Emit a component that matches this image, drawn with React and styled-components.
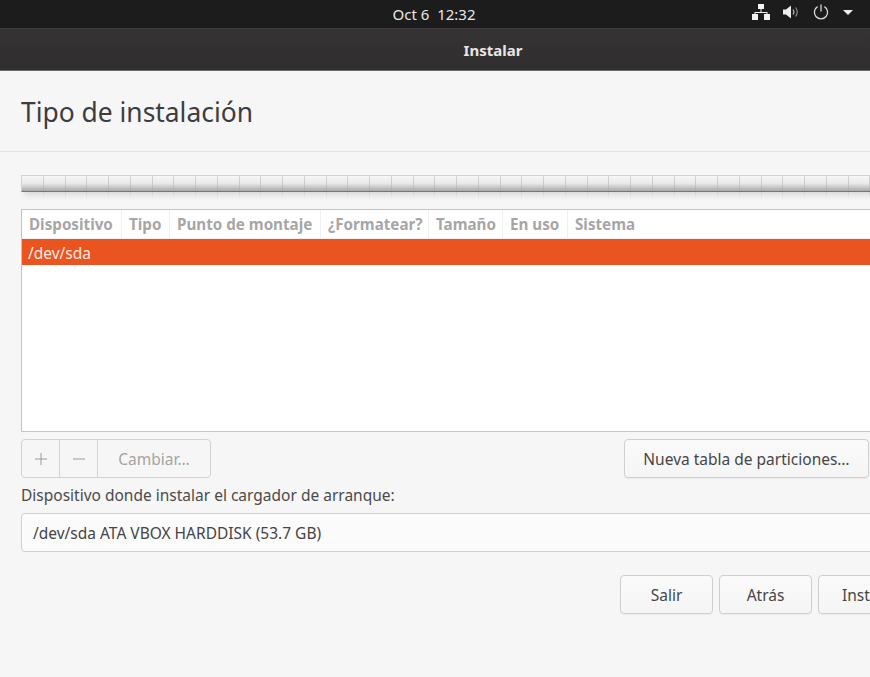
import React from 'react';
import styled, { createGlobalStyle } from 'styled-components';

const GlobalStyle = createGlobalStyle`
  html, body {
    margin: 0;
    padding: 0;
    height: 100%;
    overflow: hidden;
    background: #f6f6f6;
  }
  * { box-sizing: border-box; }
`;

const columns = [
  { label: 'Dispositivo', width: 100 },
  { label: 'Tipo', width: 48 },
  { label: 'Punto de montaje', width: 151 },
  { label: '¿Formatear?', width: 108 },
  { label: 'Tamaño', width: 74 },
  { label: 'En uso', width: 65 },
  { label: 'Sistema', width: 100 },
];

const App = () => (
  <Page>
    <GlobalStyle />
    <TopBar>
      <Clock>Oct 6&nbsp;&nbsp;12:32</Clock>
      <Tray>
        <svg width="18" height="16" viewBox="0 0 18 16" fill="#f2f2f2">
          <rect x="6" y="0" width="6" height="5" />
          <rect x="0" y="10" width="6" height="6" />
          <rect x="12" y="10" width="6" height="6" />
          <path d="M8.5 5h1v3h6v2h-1V9h-11v1h-1V8h6z" />
        </svg>
        <svg width="17" height="16" viewBox="0 0 17 16" fill="none">
          <path d="M0 5.5h3L8 1.5v13l-5-4H0z" fill="#eeeeee" />
          <path d="M10 5.5c1 1.4 1 3.6 0 5" stroke="#bbbbbb" strokeWidth="1.2" />
          <path d="M12.5 3.5c2 2.6 2 6.4 0 9" stroke="#8a8a8a" strokeWidth="1.2" />
        </svg>
        <svg width="16" height="16" viewBox="0 0 16 16" fill="none" stroke="#d8d8d8" strokeWidth="1.3">
          <path d="M4.6 2.6a6.6 6.6 0 1 0 6.8 0" />
          <path d="M8 0.5v7" />
        </svg>
        <Caret />
      </Tray>
    </TopBar>
    <TitleBar>Instalar</TitleBar>
    <Header>
      <Heading>Tipo de instalación</Heading>
    </Header>
    <Content>
      <PartitionBar>
        {Array.from({ length: 40 }).map((_, i) => (
          <Tick key={i} />
        ))}
      </PartitionBar>
      <Table>
        <HeaderRow>
          {columns.map((c) => (
            <HeaderCell key={c.label} $width={c.width}>
              {c.label}
            </HeaderCell>
          ))}
        </HeaderRow>
        <SelectedRow>/dev/sda</SelectedRow>
      </Table>
      <Toolbar>
        <ButtonGroup>
          <GroupButton $width={38}>
            <svg width="14" height="14" viewBox="0 0 14 14" stroke="#9a9a9a" strokeWidth="1">
              <path d="M7 1v12M1 7h12" />
            </svg>
          </GroupButton>
          <GroupButton $width={38}>
            <svg width="14" height="14" viewBox="0 0 14 14" stroke="#9a9a9a" strokeWidth="1">
              <path d="M1 7h12" />
            </svg>
          </GroupButton>
          <GroupButton $width={112}>Cambiar…</GroupButton>
        </ButtonGroup>
        <Button $width={245}>Nueva tabla de particiones…</Button>
      </Toolbar>
      <BootLabel>Dispositivo donde instalar el cargador de arranque:</BootLabel>
      <BootSelect>/dev/sda ATA VBOX HARDDISK (53.7 GB)</BootSelect>
      <Actions>
        <Button $width={93}>Salir</Button>
        <Button $width={93}>Atrás</Button>
        <Button $width={150}>Instalar ahora</Button>
      </Actions>
    </Content>
  </Page>
);

const Page = styled.div`
  width: 870px;
  height: 677px;
  overflow: hidden;
  background: #f6f6f6;
  font-family: 'Noto Sans', 'Open Sans', sans-serif;
  color: #3d3d3d;
`;

const TopBar = styled.div`
  height: 28px;
  display: flex;
  align-items: center;
  justify-content: center;
  position: relative;
  padding-right: 2px;
  background: #1c1c1c;
`;

const Clock = styled.div`
  font-size: 15px;
  color: #e8e8e8;
`;

const Tray = styled.div`
  position: absolute;
  top: 4px;
  right: 17px;
  display: flex;
  align-items: center;
  gap: 13px;
`;

const Caret = styled.div`
  width: 0;
  height: 0;
  margin-left: 1px;
  border-left: 5.5px solid transparent;
  border-right: 5.5px solid transparent;
  border-top: 5px solid #eeeeee;
`;

const TitleBar = styled.div`
  height: 43px;
  padding-left: 116px;
  display: flex;
  align-items: center;
  justify-content: center;
  background: linear-gradient(#353333, #2f2d2d);
  border-top: 1px solid #3d3b3b;
  border-bottom: 1px solid #6a6a6a;
  color: #e6e6e6;
  font-size: 15px;
  font-weight: 700;
`;

const Header = styled.div`
  height: 81px;
  padding: 24px 21px 0;
  border-bottom: 1px solid #e4e4e4;
`;

const Heading = styled.h1`
  margin: 0;
  font-size: 26.4px;
  font-weight: 400;
  line-height: 34px;
  color: #3d3d3d;
`;

const Content = styled.div`
  width: 900px;
  padding: 23px 0 0 21px;
`;

const PartitionBar = styled.div`
  height: 17px;
  display: flex;
  border-top: 1px solid #d2d2d2;
  border-left: 1px solid #d2d2d2;
  border-bottom: 1px solid #777777;
  background: linear-gradient(#f8f8f8, #e8e8e8 50%, #a8a8a8);
  box-shadow: 0 6px 6px -3px rgba(0, 0, 0, 0.12);
`;

const Tick = styled.div`
  flex: 0 0 21.75px;
  position: relative;
  border-right: 1px solid rgba(170, 170, 170, 0.45);
  &::after {
    content: '';
    position: absolute;
    top: 100%;
    right: -1px;
    width: 1px;
    height: 8px;
    background: linear-gradient(rgba(0, 0, 0, 0.08), rgba(0, 0, 0, 0));
  }
`;

const Table = styled.div`
  height: 223px;
  margin-top: 17px;
  background: #ffffff;
  border: 1px solid #c4c4c4;
`;

const HeaderRow = styled.div`
  height: 29px;
  display: flex;
  border-bottom: 1px solid #f0f0f0;
`;

const HeaderCell = styled.div`
  width: ${(p) => p.$width}px;
  padding-left: 7px;
  display: flex;
  align-items: center;
  border-right: 1px solid #efefef;
  font-size: 15.2px;
  font-weight: 700;
  color: #a6a6a6;
  white-space: nowrap;
  &:last-child { border-right: none; }
`;

const SelectedRow = styled.div`
  height: 26px;
  padding: 1px 0 0 6px;
  display: flex;
  align-items: center;
  background: #e95420;
  color: #fbe9e2;
  font-size: 15.5px;
`;

const Toolbar = styled.div`
  width: 848px;
  margin-top: 7px;
  display: flex;
  justify-content: space-between;
`;

const ButtonGroup = styled.div`
  height: 39px;
  display: flex;
  border: 1px solid #d2d2d2;
  border-radius: 4px;
  background: #f6f6f6;
`;

const GroupButton = styled.div`
  width: ${(p) => p.$width}px;
  display: flex;
  align-items: center;
  justify-content: center;
  border-right: 1px solid #d2d2d2;
  color: #a4a4a4;
  font-size: 15.5px;
  &:last-child { border-right: none; }
`;

const Button = styled.div`
  width: ${(p) => p.$width}px;
  height: 39px;
  flex: none;
  display: flex;
  align-items: center;
  justify-content: center;
  white-space: nowrap;
  border: 1px solid #cfcfcf;
  border-radius: 4px;
  background: linear-gradient(#fafafa, #f5f5f5);
  box-shadow: 0 1px 1px rgba(0, 0, 0, 0.05);
  font-size: 15.5px;
  color: #464646;
`;

const BootLabel = styled.div`
  margin-top: 8px;
  height: 19px;
  line-height: 19px;
  font-size: 15.5px;
  color: #4a4a4a;
`;

const BootSelect = styled.div`
  height: 39px;
  margin-top: 8px;
  padding-left: 11px;
  display: flex;
  align-items: center;
  border: 1px solid #d0d0d0;
  border-radius: 4px;
  background: #fbfbfb;
  font-size: 15.5px;
  color: #444444;
`;

const Actions = styled.div`
  margin: 23px 0 0 599px;
  display: flex;
  gap: 6px;
`;

export default App;
